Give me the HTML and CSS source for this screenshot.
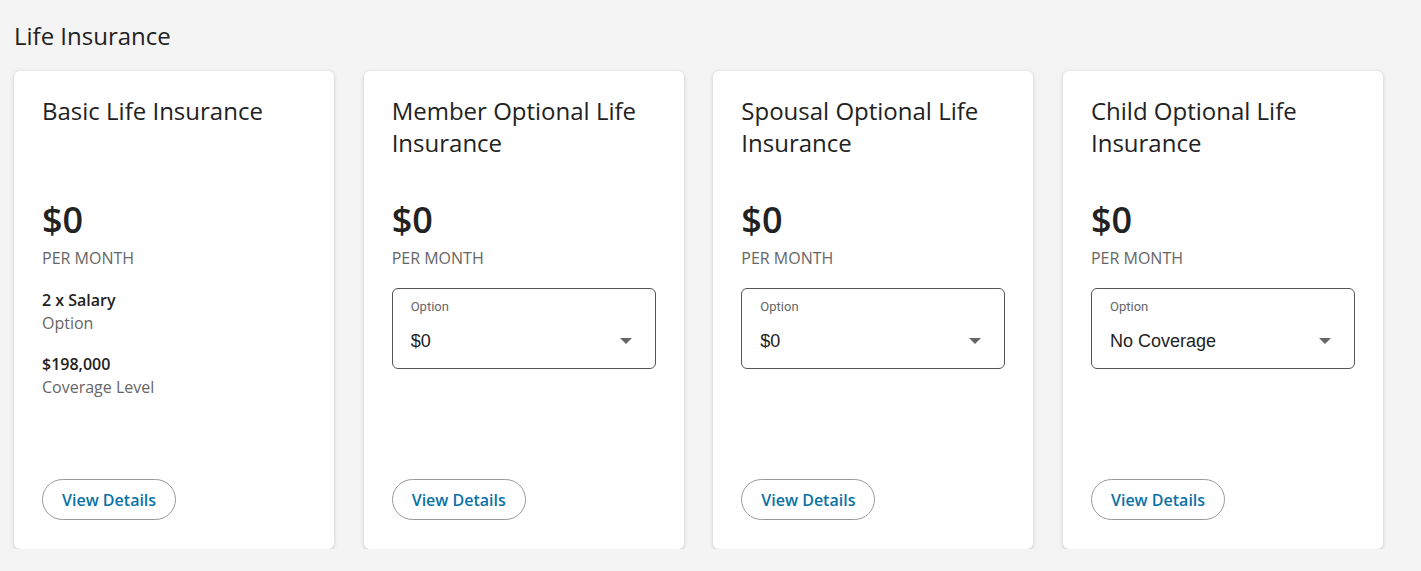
FILE: index.html
```html
<!DOCTYPE html>
<html lang="en">
<head>
<meta charset="utf-8">
<title>Life Insurance</title>
<link rel="stylesheet" href="styles.css">
</head>
<body>
<main class="page">
  <h1 class="section-title">Life Insurance</h1>
  <div class="cards">
    <section class="card">
      <h2 class="card-title">Basic Life Insurance</h2>
      <div class="price">$0</div>
      <div class="per">PER MONTH</div>
      <div class="detail first">
        <div class="detail-value">2 x Salary</div>
        <div class="detail-label">Option</div>
      </div>
      <div class="detail">
        <div class="detail-value">$198,000</div>
        <div class="detail-label">Coverage Level</div>
      </div>
      <button class="btn">View Details</button>
    </section>
    <section class="card">
      <h2 class="card-title">Member Optional Life Insurance</h2>
      <div class="price">$0</div>
      <div class="per">PER MONTH</div>
      <div class="select">
        <div class="select-label">Option</div>
        <div class="select-row">
          <span class="select-value">$0</span>
          <svg class="caret" width="12" height="6" viewBox="0 0 12 6"><path d="M0 0h12L6 6z" fill="#666"/></svg>
        </div>
      </div>
      <button class="btn">View Details</button>
    </section>
    <section class="card">
      <h2 class="card-title">Spousal Optional Life Insurance</h2>
      <div class="price">$0</div>
      <div class="per">PER MONTH</div>
      <div class="select">
        <div class="select-label">Option</div>
        <div class="select-row">
          <span class="select-value">$0</span>
          <svg class="caret" width="12" height="6" viewBox="0 0 12 6"><path d="M0 0h12L6 6z" fill="#666"/></svg>
        </div>
      </div>
      <button class="btn">View Details</button>
    </section>
    <section class="card">
      <h2 class="card-title">Child Optional Life Insurance</h2>
      <div class="price">$0</div>
      <div class="per">PER MONTH</div>
      <div class="select">
        <div class="select-label">Option</div>
        <div class="select-row">
          <span class="select-value">No Coverage</span>
          <svg class="caret" width="12" height="6" viewBox="0 0 12 6"><path d="M0 0h12L6 6z" fill="#666"/></svg>
        </div>
      </div>
      <button class="btn">View Details</button>
    </section>
  </div>
</main>
</body>
</html>
```

FILE: styles.css
```css
* { box-sizing: border-box; }

html, body {
  margin: 0;
  padding: 0;
  background: #f4f4f4;
}

body {
  font-family: "Open Sans", "Liberation Sans", sans-serif;
  color: #222;
}

.page {
  padding: 20px 0 0 14px;
}

.section-title {
  margin: 0;
  font-size: 24px;
  line-height: 32px;
  font-weight: 400;
  color: #222;
}

.cards {
  display: grid;
  grid-template-columns: repeat(4, 320px);
  column-gap: 29.67px;
  margin-top: 19px;
}

.card {
  background: #fff;
  border-radius: 6px;
  box-shadow: 0 1px 4px rgba(0, 0, 0, 0.18);
  height: 478px;
  padding: 24px 28px 29px;
  display: flex;
  flex-direction: column;
  align-items: flex-start;
}

.card-title {
  margin: 0;
  font-size: 24px;
  line-height: 32px;
  font-weight: 400;
  min-height: 64px;
  color: #222;
}

.price {
  margin-top: 37px;
  font-size: 36px;
  line-height: 48px;
  font-weight: 600;
  color: #222;
}

.per {
  margin-top: 2px;
  font-size: 16px;
  line-height: 24px;
  color: #666;
}

.detail {
  margin-top: 18px;
}

.detail.first {
  margin-top: 19px;
}

.detail-value {
  font-size: 16px;
  line-height: 22px;
  font-weight: 600;
  color: #222;
}

.detail-label {
  font-size: 16px;
  line-height: 24px;
  color: #666;
}

.select {
  margin-top: 18px;
  width: 100%;
  height: 81px;
  border: 1px solid #555;
  border-radius: 6px;
  padding: 9px 23px 0 18px;
}

.select-label {
  font-family: Roboto, "Liberation Sans", sans-serif;
  font-size: 13px;
  line-height: 18px;
  color: #666;
}

.select-row {
  display: flex;
  align-items: center;
  justify-content: space-between;
  margin-top: 9px;
  height: 32px;
}

.select-value {
  font-family: "Liberation Sans", Arial, sans-serif;
  font-size: 18px;
  color: #222;
}

.caret {
  display: block;
}

.btn {
  margin-top: auto;
  height: 41px;
  padding: 0 19px;
  border: 1px solid #999;
  border-radius: 21px;
  background: #fff;
  font-family: "Open Sans", "Liberation Sans", sans-serif;
  font-size: 16px;
  font-weight: 600;
  color: #0a72a6;
  cursor: pointer;
}
```
